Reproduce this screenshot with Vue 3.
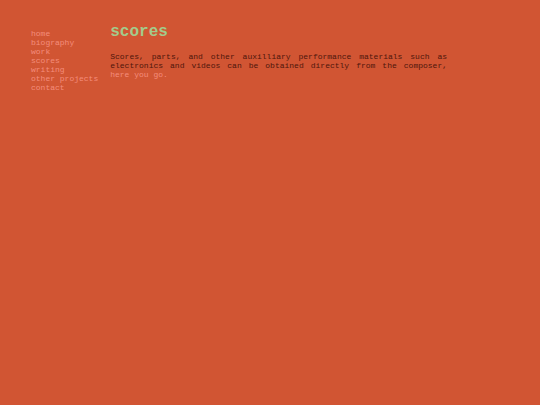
<template>
  <div class="page">
    <nav>
      <a v-for="link in links" :key="link" href="#">{{ link }}</a>
    </nav>
    <main>
      <h1>scores</h1>
      <p>
        Scores, parts, and other auxilliary performance materials such as
        electronics and videos can be obtained directly from the composer,
        <a href="#">here you go.</a>
      </p>
    </main>
  </div>
</template>

<script setup>
const links = ['home', 'biography', 'work', 'scores', 'writing', 'other projects', 'contact']
</script>

<style>
body {
  background: #d15533;
}
</style>

<style scoped>
.page {
  display: flex;
  gap: 12px;
  padding: 24px 93px 24px 31px;
  font-family: "Courier New", "Liberation Mono", monospace;
  font-size: 8px;
  line-height: 9px;
  color: #4f160c;
}

nav {
  display: flex;
  flex-direction: column;
  flex-shrink: 0;
  padding-top: 5px;
}

a {
  color: #f48d7c;
  text-decoration: none;
}

main {
  flex: 1;
}

h1 {
  margin: 0 0 11px;
  font-size: 16px;
  line-height: 17px;
  color: #a3cb8b;
}

p {
  margin: 0;
  text-align: justify;
}
</style>
